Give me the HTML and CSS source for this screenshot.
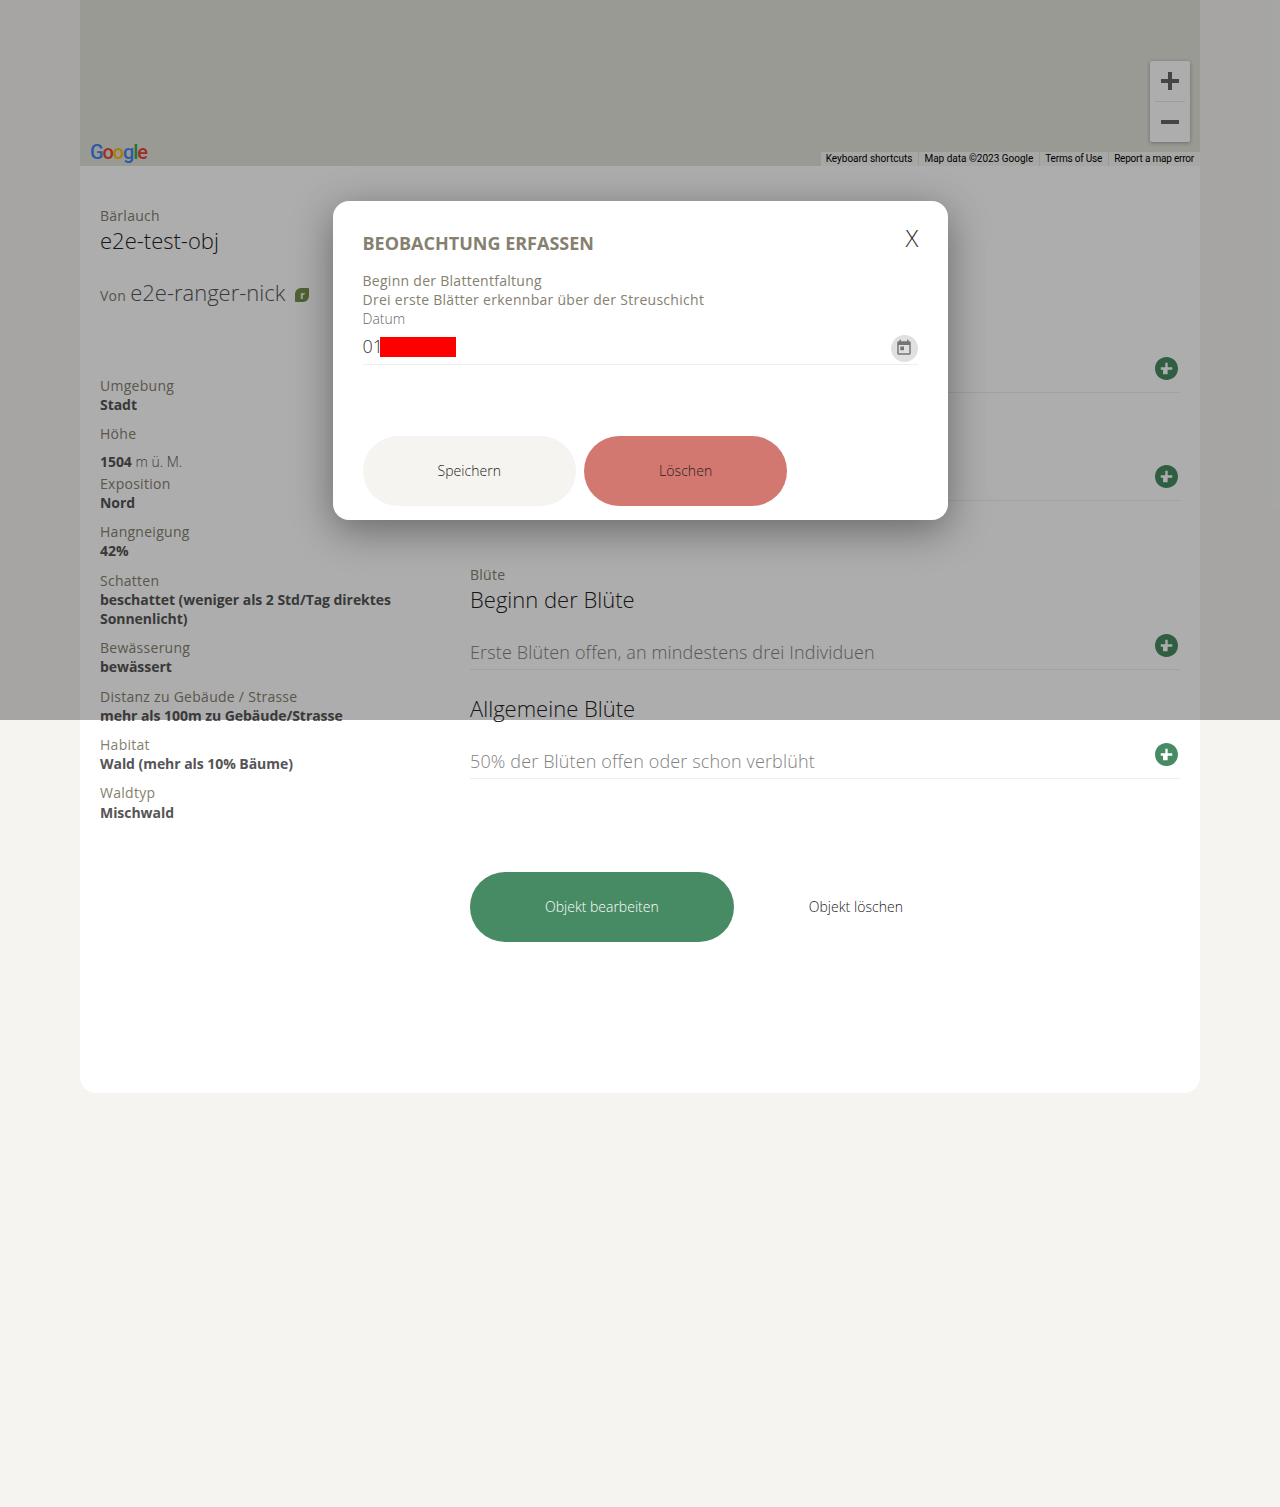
FILE: index.html
```html
<!DOCTYPE html>
<html lang="de">
<head>
<meta charset="UTF-8">
<meta name="viewport" content="width=device-width, initial-scale=1.0">
<title>e2e-test-obj</title>
<link rel="stylesheet" href="styles.css">
</head>
<body>

<div class="container">
    <div class="map">
        <div class="google-logo"><span class="g-blue">G</span><span class="g-red">o</span><span class="g-yellow">o</span><span class="g-blue">g</span><span class="g-green">l</span><span class="g-red">e</span></div>
        <div class="zoom-control">
            <div class="zoom-btn">
                <svg width="18" height="18" viewBox="0 0 18 18"><path d="M7 0h4v7h7v4h-7v7H7v-7H0V7h7z"/></svg>
            </div>
            <div class="zoom-line"></div>
            <div class="zoom-btn">
                <svg width="18" height="18" viewBox="0 0 18 18"><path d="M0 7h18v4H0z"/></svg>
            </div>
        </div>
        <div class="map-links">
            <span>Keyboard shortcuts</span>
            <span>Map data ©2023 Google</span>
            <span class="tight">Terms of Use</span>
            <span class="tight">Report a map error</span>
        </div>
    </div>

    <div class="content">
        <div class="left">
            <div class="head">
                <div class="label">Bärlauch</div>
                <div class="obj-name">e2e-test-obj</div>
                <div class="owner">
                    <span class="label">Von</span>
                    <span class="owner-name">e2e-ranger-nick</span>
                    <span class="leaf">r</span>
                </div>
            </div>
            <div class="item"><div class="label">Umgebung</div><div class="value">Stadt</div></div>
            <div class="item item-height">
                <div class="label">Höhe</div>
                <div class="value height-value">1504 <span class="unit">m ü. M.</span></div>
            </div>
            <div class="item"><div class="label">Exposition</div><div class="value">Nord</div></div>
            <div class="item"><div class="label">Hangneigung</div><div class="value">42%</div></div>
            <div class="item"><div class="label">Schatten</div><div class="value">beschattet (weniger als 2 Std/Tag direktes Sonnenlicht)</div></div>
            <div class="item"><div class="label">Bewässerung</div><div class="value">bewässert</div></div>
            <div class="item"><div class="label">Distanz zu Gebäude / Strasse</div><div class="value">mehr als 100m zu Gebäude/Strasse</div></div>
            <div class="item"><div class="label">Habitat</div><div class="value">Wald (mehr als 10% Bäume)</div></div>
            <div class="item"><div class="label">Waldtyp</div><div class="value">Mischwald</div></div>
        </div>

        <div class="right">
            <div class="group">
                <div class="label"></div>
                <div class="phase"></div>
                <div class="phase-row">
                    <span></span>
                    <svg class="add" viewBox="2 2 20 20"><path d="M12 2C6.48 2 2 6.48 2 12s4.48 10 10 10 10-4.48 10-10S17.52 2 12 2zm5 11h-4v4h-4v-4H7v-2h4V7h2v4h4v2z"/></svg>
                </div>
                <div class="phase"></div>
                <div class="phase-row">
                    <span></span>
                    <svg class="add" viewBox="2 2 20 20"><path d="M12 2C6.48 2 2 6.48 2 12s4.48 10 10 10 10-4.48 10-10S17.52 2 12 2zm5 11h-4v4h-4v-4H7v-2h4V7h2v4h4v2z"/></svg>
                </div>
            </div>
            <div class="group">
                <div class="label">Blüte</div>
                <div class="phase">Beginn der Blüte</div>
                <div class="phase-row">
                    <span>Erste Blüten offen, an mindestens drei Individuen</span>
                    <svg class="add" viewBox="2 2 20 20"><path d="M12 2C6.48 2 2 6.48 2 12s4.48 10 10 10 10-4.48 10-10S17.52 2 12 2zm5 11h-4v4h-4v-4H7v-2h4V7h2v4h4v2z"/></svg>
                </div>
                <div class="phase">Allgemeine Blüte</div>
                <div class="phase-row">
                    <span>50% der Blüten offen oder schon verblüht</span>
                    <svg class="add" viewBox="2 2 20 20"><path d="M12 2C6.48 2 2 6.48 2 12s4.48 10 10 10 10-4.48 10-10S17.52 2 12 2zm5 11h-4v4h-4v-4H7v-2h4V7h2v4h4v2z"/></svg>
                </div>
            </div>
            <div class="actions">
                <button class="btn btn-green">Objekt bearbeiten</button>
                <button class="btn btn-plain">Objekt löschen</button>
            </div>
        </div>
    </div>
</div>

<div class="overlay">
    <div class="modal">
        <div class="modal-head">
            <h2>Beobachtung erfassen</h2>
            <div class="close">X</div>
        </div>
        <div class="modal-text">Beginn der Blattentfaltung</div>
        <div class="modal-text">Drei erste Blätter erkennbar über der Streuschicht</div>
        <div class="date-label">Datum</div>
        <div class="date-input">
            <span class="date-value">01</span><span class="redacted"></span>
            <span class="date-icon">
                <svg width="18" height="18" viewBox="0 0 24 24"><path d="M19 3h-1V1h-2v2H8V1H6v2H5c-1.11 0-1.99.9-1.99 2L3 19c0 1.1.89 2 2 2h14c1.1 0 2-.9 2-2V5c0-1.1-.9-2-2-2zm0 16H5V8h14v11zM7 10h5v5H7z"/></svg>
            </span>
        </div>
        <div class="modal-buttons">
            <button class="btn btn-light">Speichern</button>
            <button class="btn btn-red">Löschen</button>
        </div>
    </div>
</div>

</body>
</html>
```

FILE: styles.css
```css
body {
    margin: 0;
    background-color: #f5f4f0;
    font-family: "Open Sans", sans-serif;
    font-size: 14px;
    color: #333;
    min-height: 1507px;
}
.container {
    width: 1120px;
    height: 1093px;
    margin: 0 auto;
    background-color: white;
    border-radius: 0 0 16px 16px;
}

/* map */
.map {
    position: relative;
    height: 166px;
    background-color: #e4e3dc;
}
.google-logo {
    position: absolute;
    left: 10px;
    bottom: 2px;
    font-family: Roboto, sans-serif;
    font-size: 20px;
    font-weight: 500;
    letter-spacing: -1.1px;
    line-height: 24px;
}
.g-blue { color: #4285f4; }
.g-red { color: #ea4335; }
.g-yellow { color: #fbbc05; }
.g-green { color: #34a853; }
.zoom-control {
    position: absolute;
    top: 61px;
    right: 10px;
    width: 40px;
    height: 81px;
    background-color: white;
    border-radius: 2px;
    box-shadow: 0 1px 4px rgba(0, 0, 0, 0.3);
}
.zoom-btn {
    height: 40px;
    display: flex;
    align-items: center;
    justify-content: center;
}
.zoom-btn svg { fill: #666; }
.zoom-line {
    height: 1px;
    margin: 0 5px;
    background-color: #e6e6e6;
}
.map-links {
    position: absolute;
    right: 0;
    bottom: 0;
    display: flex;
    gap: 1px;
    font-family: Roboto, Arial, sans-serif;
    font-size: 10px;
    line-height: 14px;
    color: #000;
}
.map-links span {
    padding: 0 6px 0 5px;
    background-color: rgba(255, 255, 255, 0.7);
}
.map-links .tight {
    letter-spacing: -0.2px;
}

/* content */
.content {
    display: grid;
    grid-template-columns: 350px 710px;
    column-gap: 20px;
    padding: 40px 20px 0;
}
.label {
    min-height: 19px;
    color: #85806f;
    line-height: 19.2px;
    letter-spacing: 0.27px;
}
.value {
    font-weight: 700;
    line-height: 19.2px;
    letter-spacing: -0.05px;
    color: #555;
}
.head {
    height: 170px;
}
.obj-name {
    font-size: 22px;
    font-weight: 300;
    line-height: 30px;
    color: #222;
}
.owner {
    margin-top: 22px;
    display: flex;
    align-items: center;
    line-height: 30px;
}
.owner-name {
    margin-left: 4px;
    font-size: 22px;
    font-weight: 300;
    color: #555;
}
.owner .label {
    margin-top: 7px;
}
.leaf {
    width: 14px;
    height: 14px;
    margin-left: 10px;
    margin-top: 5px;
    background-color: #74914a;
    border-radius: 6px 1px 6px 1px;
    color: white;
    font-size: 10px;
    font-weight: 700;
    line-height: 14px;
    text-align: center;
}
.item {
    margin-bottom: 10px;
}
.item-height {
    margin-bottom: 3px;
}
.height-value {
    margin-top: 8px;
}
.unit {
    font-weight: 300;
    letter-spacing: 0;
}

.right {
    padding-top: 81.6px;
}
.group {
    margin-bottom: 64.1px;
}
.phase {
    min-height: 30px;
    font-size: 22px;
    font-weight: 300;
    line-height: 30px;
    color: #222;
}
.phase-row + .phase {
    margin-top: 22.5px;
}
.phase-row {
    display: flex;
    justify-content: space-between;
    margin-top: 26px;
    padding-right: 2px;
    padding-bottom: 4px;
    height: 25px;
    border-bottom: 1px solid #eee;
    font-size: 18px;
    font-weight: 300;
    line-height: 25px;
    letter-spacing: 0.14px;
    color: #808080;
}
.add {
    width: 23px;
    height: 23px;
    margin-top: -6px;
    fill: #478b64;
}
.actions {
    margin-top: 93px;
    display: flex;
}
.btn {
    height: 70px;
    padding: 0 75px;
    border: none;
    border-radius: 35px;
    font-family: "Open Sans", sans-serif;
    font-size: 14px;
    font-weight: 300;
    letter-spacing: 0.05px;
    color: #222;
}
.btn-green {
    background-color: #478b64;
    color: white;
    letter-spacing: 0;
}
.btn-plain {
    background-color: transparent;
}
.btn-light {
    background-color: #f5f4f0;
}
.btn-red {
    background-color: #d37771;
}

/* modal */
.overlay {
    position: absolute;
    top: 0;
    left: 0;
    width: 100%;
    height: 720px;
    background-color: rgba(0, 0, 0, 0.32);
    display: flex;
    align-items: center;
    justify-content: center;
}
.modal {
    box-sizing: border-box;
    width: 615px;
    height: 319px;
    padding: 30px 30px 14px;
    background-color: white;
    border-radius: 16px;
    box-shadow: 0 10px 40px rgba(0, 0, 0, 0.4);
}
.modal-head {
    display: flex;
    justify-content: space-between;
    height: 40px;
}
.modal-head h2 {
    margin: 0;
    font-size: 18px;
    font-weight: 700;
    line-height: 24px;
    text-transform: uppercase;
    color: #85806f;
}
.close {
    margin-right: -1px;
    font-size: 24px;
    font-weight: 300;
    line-height: 14px;
}
.modal-text {
    color: #85806f;
    line-height: 19px;
    letter-spacing: 0.28px;
}
.date-label {
    font-weight: 300;
    color: #666;
    line-height: 19px;
}
.date-input {
    display: flex;
    align-items: center;
    height: 35px;
    margin-top: 1px;
    border-bottom: 1px solid #eee;
    font-size: 18px;
    font-weight: 300;
}
.redacted {
    width: 76px;
    height: 20px;
    margin-top: 1px;
    margin-left: -3px;
    background-color: #f00;
}
.date-icon {
    margin-left: auto;
    margin-top: 4px;
    width: 27px;
    height: 27px;
    border-radius: 50%;
    background-color: #e0e0e0;
    display: flex;
    align-items: center;
    justify-content: center;
}
.date-icon svg { fill: #757575; }
.modal-buttons {
    margin-top: 71px;
    display: flex;
    gap: 8px;
}
```
